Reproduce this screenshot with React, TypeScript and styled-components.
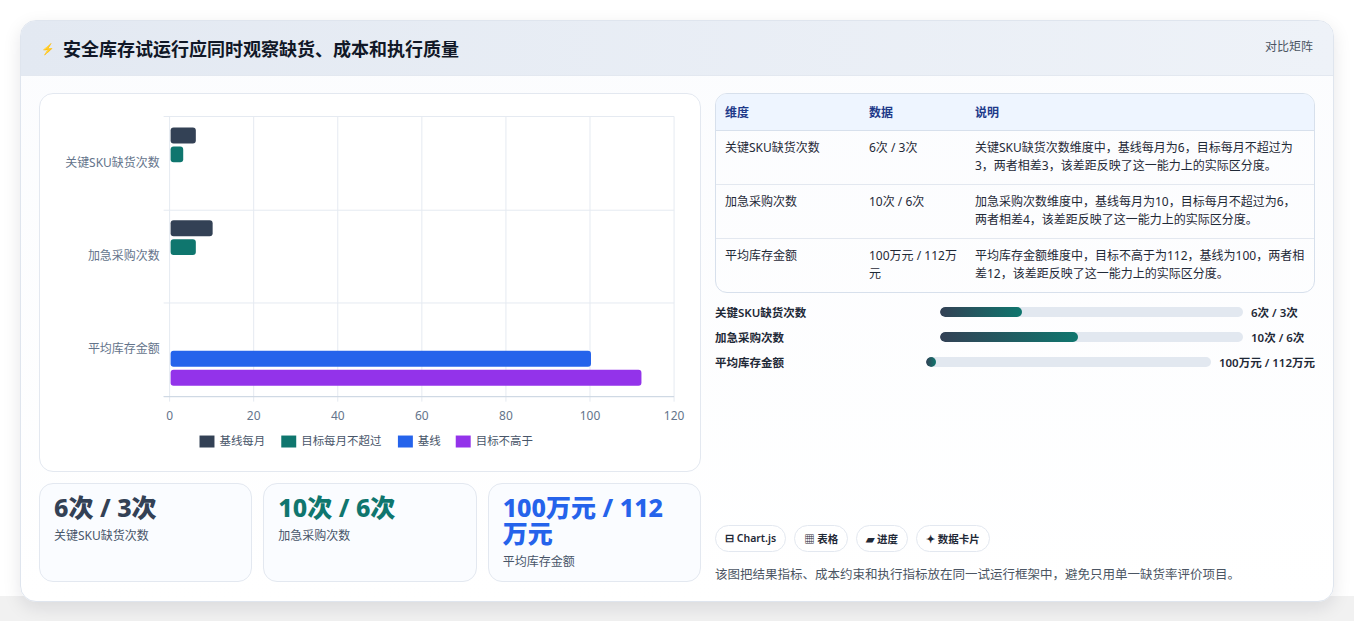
import React from "react";
import styled, { createGlobalStyle } from "styled-components";

const Global = createGlobalStyle`
  body {
    margin: 0;
    background: #ffffff;
    font-family: "Noto Sans", "Noto Sans CJK SC", sans-serif;
    color: #1e293b;
  }
`;

const Page = styled.div`
  padding: 20px 20px 20px 20px;
  height: 621px;
  box-sizing: border-box;
  background: linear-gradient(#ffffff 0 96%, #f1f1f1 96%);
`;

const Card = styled.div`
  border: 1px solid #dfe5ee;
  border-radius: 16px;
  overflow: hidden;
  background: linear-gradient(180deg, #fbfcfe, #ffffff);
  box-shadow: 0 6px 18px rgba(15, 23, 42, 0.1);
  height: 580px;
  display: flex;
  flex-direction: column;
`;

const Header = styled.div`
  height: 54px;
  flex: none;
  display: flex;
  align-items: center;
  justify-content: space-between;
  padding: 0 20px;
  background: linear-gradient(90deg, #e3e9f2, #eef2f8);
  border-bottom: 1px solid #e3e8f0;
`;

const Title = styled.h1`
  margin: 0;
  font-size: 18px;
  font-weight: 700;
  color: #111827;
  display: flex;
  align-items: center;
  gap: 8px;
`;

const Bolt = styled.span`
  color: #2563eb;
  font-size: 11px;
`;

const HeaderTag = styled.span`
  font-size: 12px;
  color: #4b5563;
  align-self: flex-start;
  margin-top: 16px;
`;

const Body = styled.div`
  flex: 1;
  display: grid;
  grid-template-columns: 662px 1fr;
  gap: 14px;
  padding: 17px 18px 18px 18px;
`;

const LeftCol = styled.div`
  display: flex;
  flex-direction: column;
  gap: 11px;
`;

const ChartCard = styled.div`
  height: 377px;
  border: 1px solid #e3e8f0;
  border-radius: 14px;
  background: #fff;
`;

const Kpis = styled.div`
  display: grid;
  grid-template-columns: repeat(3, 1fr);
  gap: 11px;
`;

const Kpi = styled.div`
  height: 99px;
  box-sizing: border-box;
  border: 1px solid #e3e8f0;
  border-radius: 14px;
  background: #fafcff;
  padding: 10px 14px;
`;

const KpiValue = styled.div<{ $c: string }>`
  font-size: 25px;
  font-weight: 800;
  line-height: 26px;
  color: ${(p) => p.$c};
`;

const KpiLabel = styled.div`
  font-size: 12px;
  color: #475569;
  margin-top: 6px;
`;

const RightCol = styled.div`
  display: flex;
  flex-direction: column;
`;

const Table = styled.table`
  width: 100%;
  border-collapse: separate;
  border-spacing: 0;
  border: 1px solid #d7e0ec;
  border-radius: 12px;
  overflow: hidden;
  font-size: 12px;
  color: #1f2937;
`;

const Th = styled.th`
  text-align: left;
  font-weight: 600;
  color: #1e3a8a;
  background: #eef5ff;
  padding: 9px 9px;
  border-bottom: 1px solid #d7e0ec;
`;

const Td = styled.td`
  vertical-align: top;
  padding: 8px 9px 9px;
  line-height: 18px;
  border-bottom: 1px solid #e3e8f0;
  tr:last-child > & {
    border-bottom: none;
  }
`;

const Bars = styled.div`
  display: flex;
  flex-direction: column;
  gap: 7px;
  margin-top: 10px;
`;

const BarRow = styled.div`
  display: flex;
  align-items: center;
  gap: 8px;
  font-size: 11.5px;
  font-weight: 600;
  color: #1f2937;
  height: 18px;
`;

const BarLabel = styled.span`
  flex: 1;
`;

const Track = styled.div`
  flex: 1.4;
  height: 10px;
  border-radius: 5px;
  background: #e2e8f0;
  overflow: hidden;
`;

const Fill = styled.div`
  height: 100%;
  border-radius: 5px;
  background: linear-gradient(90deg, #334155, #0f766e);
  min-width: 10px;
`;

const BarValue = styled.span`
  min-width: 64px;
`;

const Spacer = styled.div`
  flex: 1;
`;

const Chips = styled.div`
  display: flex;
  gap: 8px;
`;

const Chip = styled.span`
  font-size: 10.5px;
  font-weight: 600;
  color: #1f2937;
  border: 1px solid #e3e8f0;
  border-radius: 14px;
  padding: 5px 9px;
  background: #fff;
`;

const Note = styled.p`
  margin: 12px 0 0;
  font-size: 12.5px;
  color: #4b5563;
`;

const X0 = 130;
const W = 506;
const sx = (v: number) => (v / 120) * W;

const bars = [
  { y: 33, v: 6, c: "#334155" },
  { y: 52, v: 3, c: "#0f766e" },
  { y: 126, v: 10, c: "#334155" },
  { y: 145, v: 6, c: "#0f766e" },
  { y: 257, v: 100, c: "#2563eb" },
  { y: 276, v: 112, c: "#9333ea" },
];

const legend = [
  { t: "基线每月", c: "#334155", x: 160 },
  { t: "目标每月不超过", c: "#0f766e", x: 242 },
  { t: "基线", c: "#2563eb", x: 359 },
  { t: "目标不高于", c: "#9333ea", x: 417 },
];

const Chart = () => (
  <svg width="100%" height="100%" viewBox="0 0 662 377">
    {[0, 20, 40, 60, 80, 100, 120].map((t) => (
      <g key={t}>
        <line x1={X0 + sx(t)} x2={X0 + sx(t)} y1={22} y2={308} stroke="#e5eaf1" />
        <text x={X0 + sx(t)} y={326} fontSize="12" fill="#64748b" textAnchor="middle">{t}</text>
      </g>
    ))}
    {[22, 116, 209, 303].map((y) => (
      <line key={y} x1={124} x2={636} y1={y} y2={y} stroke="#e5eaf1" />
    ))}
    <line x1={124} x2={636} y1={303} y2={303} stroke="#cbd5e1" />
    {[
      ["关键SKU缺货次数", 73],
      ["加急采购次数", 166],
      ["平均库存金额", 259],
    ].map(([t, y]) => (
      <text key={t as string} x={120} y={y as number} fontSize="12" fill="#64748b" textAnchor="end">{t}</text>
    ))}
    {bars.map((b, i) => (
      <rect key={i} x={X0 + 1} y={b.y} width={sx(b.v)} height={16} rx={3} fill={b.c} />
    ))}
    {legend.map((l) => (
      <g key={l.t}>
        <rect x={l.x} y={342} width={15} height={12} fill={l.c} />
        <text x={l.x + 20} y={352} fontSize="11.5" fill="#475569">{l.t}</text>
      </g>
    ))}
  </svg>
);

const rows = [
  ["关键SKU缺货次数", "6次 / 3次", "关键SKU缺货次数维度中，基线每月为6，目标每月不超过为3，两者相差3，该差距反映了这一能力上的实际区分度。"],
  ["加急采购次数", "10次 / 6次", "加急采购次数维度中，基线每月为10，目标每月不超过为6，两者相差4，该差距反映了这一能力上的实际区分度。"],
  ["平均库存金额", "100万元 / 112万元", "平均库存金额维度中，目标不高于为112，基线为100，两者相差12，该差距反映了这一能力上的实际区分度。"],
];

const progress = [
  { l: "关键SKU缺货次数", v: "6次 / 3次", p: 27 },
  { l: "加急采购次数", v: "10次 / 6次", p: 45.5 },
  { l: "平均库存金额", v: "100万元 / 112万元", p: 2 },
];

export default function App() {
  return (
    <>
      <Global />
      <Page>
        <Card>
          <Header>
            <Title>
              <Bolt>⚡</Bolt>安全库存试运行应同时观察缺货、成本和执行质量
            </Title>
            <HeaderTag>对比矩阵</HeaderTag>
          </Header>
          <Body>
            <LeftCol>
              <ChartCard>
                <Chart />
              </ChartCard>
              <Kpis>
                <Kpi>
                  <KpiValue $c="#334155">6次 / 3次</KpiValue>
                  <KpiLabel>关键SKU缺货次数</KpiLabel>
                </Kpi>
                <Kpi>
                  <KpiValue $c="#0f766e">10次 / 6次</KpiValue>
                  <KpiLabel>加急采购次数</KpiLabel>
                </Kpi>
                <Kpi>
                  <KpiValue $c="#2563eb">100万元 / 112万元</KpiValue>
                  <KpiLabel>平均库存金额</KpiLabel>
                </Kpi>
              </Kpis>
            </LeftCol>
            <RightCol>
              <Table>
                <colgroup>
                  <col style={{ width: 144 }} />
                  <col style={{ width: 106 }} />
                  <col />
                </colgroup>
                <thead>
                  <tr>
                    <Th>维度</Th>
                    <Th>数据</Th>
                    <Th>说明</Th>
                  </tr>
                </thead>
                <tbody>
                  {rows.map((r) => (
                    <tr key={r[0]}>
                      <Td>{r[0]}</Td>
                      <Td>{r[1]}</Td>
                      <Td>{r[2]}</Td>
                    </tr>
                  ))}
                </tbody>
              </Table>
              <Bars>
                {progress.map((p) => (
                  <BarRow key={p.l}>
                    <BarLabel>{p.l}</BarLabel>
                    <Track>
                      <Fill style={{ width: `${p.p}%` }} />
                    </Track>
                    <BarValue>{p.v}</BarValue>
                  </BarRow>
                ))}
              </Bars>
              <Spacer />
              <Chips>
                <Chip>⊟ Chart.js</Chip>
                <Chip>▦ 表格</Chip>
                <Chip>▰ 进度</Chip>
                <Chip>✦ 数据卡片</Chip>
              </Chips>
              <Note>该图把结果指标、成本约束和执行指标放在同一试运行框架中，避免只用单一缺货率评价项目。</Note>
            </RightCol>
          </Body>
        </Card>
      </Page>
    </>
  );
}
